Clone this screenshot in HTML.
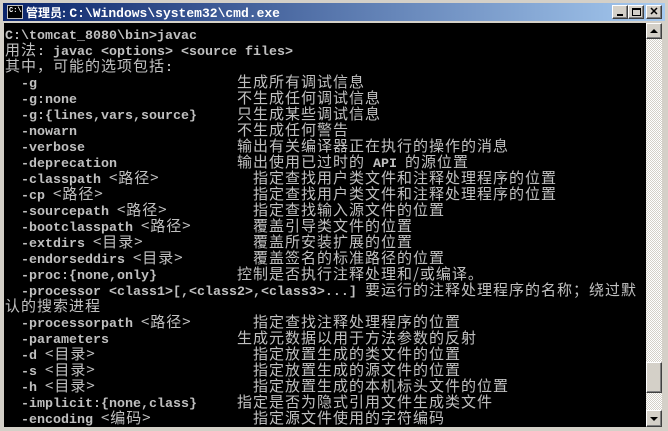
<!DOCTYPE html><html><head><meta charset="utf-8"><style>
*{margin:0;padding:0;box-sizing:border-box}
body{width:668px;height:431px;overflow:hidden;background:#d4d0c8;position:relative;font-family:"Liberation Mono","Noto Sans CJK SC",monospace}
#tb{position:absolute;left:3px;top:3px;width:662px;height:18px;background:linear-gradient(90deg,#0a246a,#a6caf0)}
#tt{position:absolute;left:23px;top:1px;color:#fff;font:bold 12px "Liberation Sans","Noto Sans CJK SC",sans-serif;white-space:pre}
#tt .m{font-family:"Liberation Mono",monospace;font-size:13px}
#ic{position:absolute;left:4px;top:2px;width:16px;height:14px;background:#000;border:1px solid #c0c0c0;color:#fff;font:bold 7px "Liberation Mono";line-height:10px;padding-left:1px}
.btn{position:absolute;top:5px;width:16px;height:14px;background:#d4d0c8;border:1px solid;border-color:#fff #404040 #404040 #fff;box-shadow:inset -1px -1px #808080}
#con{position:absolute;left:4px;top:23px;width:642px;height:404px;background:#000}
#sb{position:absolute;left:646px;top:23px;width:16px;height:404px;background:repeating-conic-gradient(#d4d0c8 0 25%,#fff 0 50%) 0 0/2px 2px}
.l{position:absolute;color:#c0c0c0;font-size:13.33px;line-height:16px;height:16px;white-space:pre;font-weight:bold;padding-top:2px}
.c{font-family:"Noto Sans CJK SC","WenQuanYi Zen Hei",sans-serif;font-size:15px;letter-spacing:1px;font-weight:normal;line-height:0}
</style></head><body>
<div id="tb"><div id="ic">C:\</div><div id="tt">管理员: <span class="m">C:\Windows\system32\cmd.exe</span></div></div>
<div class="btn" style="left:612px"><div style="position:absolute;left:4px;top:8px;width:6px;height:2px;background:#000"></div></div>
<div class="btn" style="left:628px"><div style="position:absolute;left:3px;top:2px;width:9px;height:8px;border:1px solid #000;border-top-width:2px"></div></div>
<div class="btn" style="left:646px;text-align:center;font:bold 11px 'Liberation Sans';line-height:12px">✕</div>
<div id="con"></div>
<div id="sb">
<div class="btn" style="left:0;top:0;height:16px"><div style="position:absolute;left:3px;top:5px;border:4px solid transparent;border-bottom-color:#000;border-top:0"></div></div>
<div class="btn" style="left:0;top:339px;height:31px"></div>
<div class="btn" style="left:0;top:387px;height:17px"><div style="position:absolute;left:3px;top:6px;border:4px solid transparent;border-top-color:#000;border-bottom:0"></div></div>
</div>
<div class="l" style="left:5px;top:27px">C:\tomcat_8080\bin>javac</div>
<div class="l" style="left:5px;top:43px"><span class="c">用法</span>: javac &lt;options&gt; &lt;source files&gt;</div>
<div class="l" style="left:5px;top:59px"><span class="c">其中，可能的选项包括</span>:</div>
<div class="l" style="left:5px;top:75px">  -g</div><div class="l" style="left:237px;top:75px"><span class="c">生成所有调试信息</span></div>
<div class="l" style="left:5px;top:91px">  -g:none</div><div class="l" style="left:237px;top:91px"><span class="c">不生成任何调试信息</span></div>
<div class="l" style="left:5px;top:107px">  -g:{lines,vars,source}</div><div class="l" style="left:237px;top:107px"><span class="c">只生成某些调试信息</span></div>
<div class="l" style="left:5px;top:123px">  -nowarn</div><div class="l" style="left:237px;top:123px"><span class="c">不生成任何警告</span></div>
<div class="l" style="left:5px;top:139px">  -verbose</div><div class="l" style="left:237px;top:139px"><span class="c">输出有关编译器正在执行的操作的消息</span></div>
<div class="l" style="left:5px;top:155px">  -deprecation</div><div class="l" style="left:237px;top:155px"><span class="c">输出使用已过时的</span> API <span class="c">的源位置</span></div>
<div class="l" style="left:5px;top:171px">  -classpath <span class="c">&lt;路径&gt;</span></div><div class="l" style="left:253px;top:171px"><span class="c">指定查找用户类文件和注释处理程序的位置</span></div>
<div class="l" style="left:5px;top:187px">  -cp <span class="c">&lt;路径&gt;</span></div><div class="l" style="left:253px;top:187px"><span class="c">指定查找用户类文件和注释处理程序的位置</span></div>
<div class="l" style="left:5px;top:203px">  -sourcepath <span class="c">&lt;路径&gt;</span></div><div class="l" style="left:253px;top:203px"><span class="c">指定查找输入源文件的位置</span></div>
<div class="l" style="left:5px;top:219px">  -bootclasspath <span class="c">&lt;路径&gt;</span></div><div class="l" style="left:253px;top:219px"><span class="c">覆盖引导类文件的位置</span></div>
<div class="l" style="left:5px;top:235px">  -extdirs <span class="c">&lt;目录&gt;</span></div><div class="l" style="left:253px;top:235px"><span class="c">覆盖所安装扩展的位置</span></div>
<div class="l" style="left:5px;top:251px">  -endorseddirs <span class="c">&lt;目录&gt;</span></div><div class="l" style="left:253px;top:251px"><span class="c">覆盖签名的标准路径的位置</span></div>
<div class="l" style="left:5px;top:267px">  -proc:{none,only}</div><div class="l" style="left:237px;top:267px"><span class="c">控制是否执行注释处理和/或编译。</span></div>
<div class="l" style="left:5px;top:283px">  -processor &lt;class1&gt;[,&lt;class2&gt;,&lt;class3&gt;...]</div><div class="l" style="left:365px;top:283px"><span class="c">要运行的注释处理程序的名称；绕过默</span></div>
<div class="l" style="left:5px;top:299px"><span class="c">认的搜索进程</span></div>
<div class="l" style="left:5px;top:315px">  -processorpath <span class="c">&lt;路径&gt;</span></div><div class="l" style="left:253px;top:315px"><span class="c">指定查找注释处理程序的位置</span></div>
<div class="l" style="left:5px;top:331px">  -parameters</div><div class="l" style="left:237px;top:331px"><span class="c">生成元数据以用于方法参数的反射</span></div>
<div class="l" style="left:5px;top:347px">  -d <span class="c">&lt;目录&gt;</span></div><div class="l" style="left:253px;top:347px"><span class="c">指定放置生成的类文件的位置</span></div>
<div class="l" style="left:5px;top:363px">  -s <span class="c">&lt;目录&gt;</span></div><div class="l" style="left:253px;top:363px"><span class="c">指定放置生成的源文件的位置</span></div>
<div class="l" style="left:5px;top:379px">  -h <span class="c">&lt;目录&gt;</span></div><div class="l" style="left:253px;top:379px"><span class="c">指定放置生成的本机标头文件的位置</span></div>
<div class="l" style="left:5px;top:395px">  -implicit:{none,class}</div><div class="l" style="left:237px;top:395px"><span class="c">指定是否为隐式引用文件生成类文件</span></div>
<div class="l" style="left:5px;top:411px">  -encoding <span class="c">&lt;编码&gt;</span></div><div class="l" style="left:253px;top:411px"><span class="c">指定源文件使用的字符编码</span></div>
</body></html>
